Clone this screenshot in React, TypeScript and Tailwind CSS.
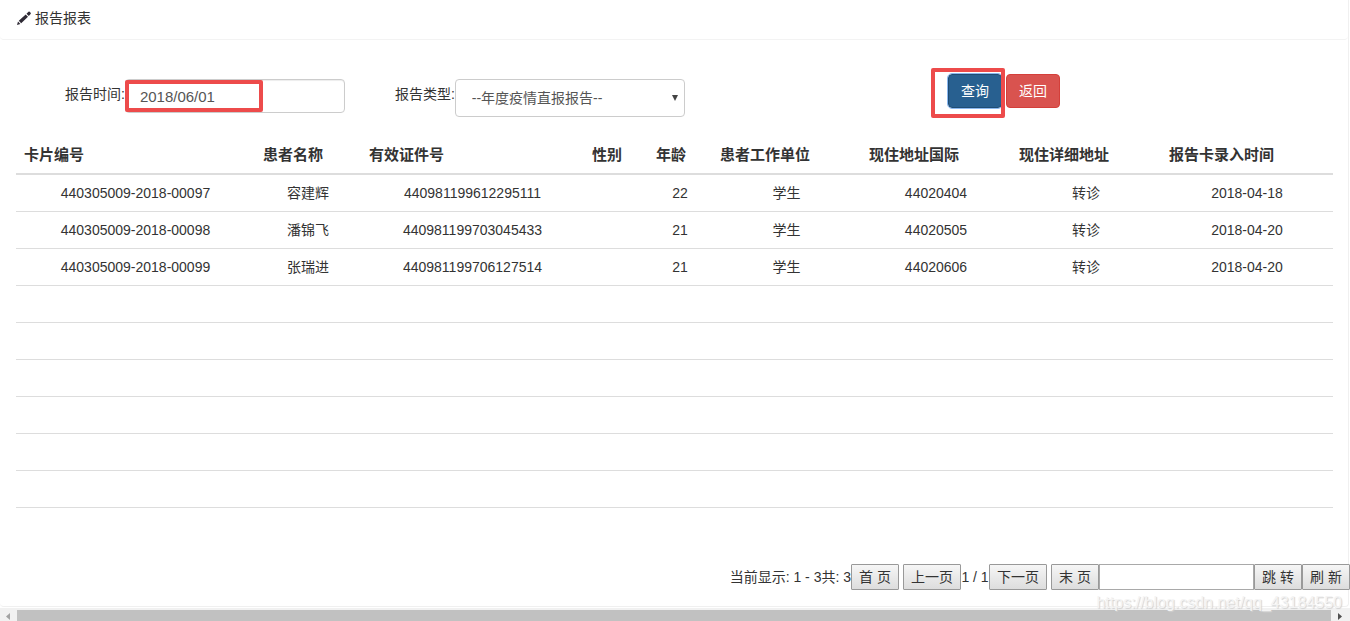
import React, { useState } from "react";

const columns = [
  { title: "卡片编号", width: "w-[239px]" },
  { title: "患者名称", width: "w-[106px]" },
  { title: "有效证件号", width: "w-[223px]" },
  { title: "性别", width: "w-16" },
  { title: "年龄", width: "w-16" },
  { title: "患者工作单位", width: "w-[149px]" },
  { title: "现住地址国际", width: "w-[150px]" },
  { title: "现住详细地址", width: "w-[150px]" },
  { title: "报告卡录入时间", width: "" },
];

const empty = ["", "", "", "", "", "", "", "", ""];

const rows = [
  ["440305009-2018-00097", "容建辉", "440981199612295111", "", "22", "学生", "44020404", "转诊", "2018-04-18"],
  ["440305009-2018-00098", "潘锦飞", "440981199703045433", "", "21", "学生", "44020505", "转诊", "2018-04-20"],
  ["440305009-2018-00099", "张瑞进", "440981199706127514", "", "21", "学生", "44020606", "转诊", "2018-04-20"],
  empty,
  empty,
  empty,
  empty,
  empty,
  empty,
];

const PencilIcon = () => (
  <svg viewBox="0 0 15 14" className="h-[14px] w-[15px]" aria-hidden="true">
    <path
      fill="#2f2a35"
      d="M1 14l1-3.4 2.4 2.4zM2.8 9.8l6.9-6.4 2.3 2.3-6.8 6.5zM10.5 2.7L12.5.8q.6-.6 1.2 0l.9.9q.6.6 0 1.2L12.8 4.9z"
    />
  </svg>
);

const PageButton: React.FC<{ text: string; className?: string }> = ({
  text,
  className = "w-12",
}) => (
  <button
    type="button"
    className={`h-[26px] shrink-0 rounded-[1px] border border-[#999] bg-linear-to-b from-[#f6f6f6] to-[#dddddd] leading-5 ${className}`}
  >
    {text}
  </button>
);

const Filters = () => {
  const [date, setDate] = useState("2018/06/01");

  return (
    <form className="flex items-start pr-[288px] pl-[65px]">
      <label htmlFor="date" className="mt-[10px] leading-5">
        报告时间:
      </label>
      <div className="relative mt-[5px] w-[220px]">
        <input
          id="date"
          value={date}
          onChange={(e) => setDate(e.target.value)}
          className="h-[34px] w-full rounded border border-[#ccc] px-[14px] text-[15px] text-[#555] shadow-[inset_0_1px_1px_rgba(0,0,0,0.075)]"
        />
        <span className="pointer-events-none absolute top-px left-0 h-8 w-[138px] rounded-xs border-4 border-[#ed4b4b]" />
      </div>

      <label htmlFor="type" className="mt-[10px] ml-[50px] leading-5">
        报告类型:
      </label>
      <div className="relative mt-[5px] w-[230px]">
        <select
          id="type"
          className="h-[38px] w-full appearance-none rounded border border-[#ccc] bg-white px-4 text-[#555]"
        >
          <option>--年度疫情直报报告--</option>
        </select>
        <svg
          viewBox="0 0 6 6"
          className="pointer-events-none absolute top-4 right-[7px] h-[6px] w-[6px]"
          aria-hidden="true"
        >
          <path fill="#444" d="M0 0h6L3 6z" />
        </svg>
      </div>

      <div className="relative ml-auto flex gap-1">
        <button
          type="button"
          className="h-[34px] rounded border border-[#204d74] bg-[#286090] px-3 text-white outline-1 outline-[#8ab8f0]"
        >
          查询
        </button>
        <button
          type="button"
          className="h-[34px] rounded border border-[#d43f3a] bg-[#d9534f] px-3 text-white"
        >
          返回
        </button>
        <span className="pointer-events-none absolute -top-[6px] -left-[17px] h-[50px] w-[74px] rounded-xs border-4 border-[#ed4b4b]" />
      </div>
    </form>
  );
};

const ReportTable = () => (
  <table className="w-full table-fixed border-collapse">
    <thead>
      <tr className="h-[38px] border-b-2 border-[#ddd] text-[15px]">
        {columns.map((col) => (
          <th key={col.title} className={`px-2 text-left font-bold ${col.width}`}>
            {col.title}
          </th>
        ))}
      </tr>
    </thead>
    <tbody>
      {rows.map((row, i) => (
        <tr key={i} className="h-[37px] border-b border-[#ddd] text-center">
          {row.map((cell, j) => (
            <td key={j}>{cell}</td>
          ))}
        </tr>
      ))}
    </tbody>
  </table>
);

const Pagination = () => (
  <div className="flex items-center justify-end whitespace-nowrap">
    <span>当前显示: 1 - 3共: 3</span>
    <PageButton text="首 页" />
    <PageButton text="上一页" className="ml-1 w-[58px]" />
    <span className="w-7 text-center">1 / 1</span>
    <PageButton text="下一页" className="w-[58px]" />
    <PageButton text="末 页" className="ml-1 w-12" />
    <input
      aria-label="页码"
      className="h-[26px] w-[155px] border border-[#a9a9a9] bg-white px-1"
    />
    <PageButton text="跳 转" />
    <PageButton text="刷 新" />
  </div>
);

const ScrollBar = () => (
  <div className="flex h-[13px] items-end overflow-hidden bg-[#f1f1f1]">
    <svg viewBox="0 0 17 11" className="h-[11px] w-[17px]" aria-hidden="true">
      <path fill="#a3a3a3" d="M10 3v7L6 6.5z" />
    </svg>
    <span className="h-[11px] flex-1 bg-[#c1c1c1]" />
    <svg viewBox="0 0 19 11" className="h-[11px] w-[19px]" aria-hidden="true">
      <path fill="#505050" d="M7 3v7l4-3.5z" />
    </svg>
  </div>
);

export default function App() {
  return (
    <div className="relative overflow-hidden bg-white font-['Liberation_Sans','Noto_Sans_CJK_SC',sans-serif] text-sm text-[#333]">
      <div className="mr-px rounded-b border-r border-b border-[#f0f0f0]">
        <header className="flex h-10 items-center gap-1 rounded-b border-b border-[#f3f3f3] px-4 pb-1">
          <PencilIcon />
          <h1>报告报表</h1>
        </header>
        <main className="pt-[34px] pb-4">
          <Filters />
          <div className="mt-[19px] pr-[15px] pl-4">
            <ReportTable />
          </div>
          <div className="-mr-0.5 mt-14">
            <Pagination />
          </div>
        </main>
      </div>
      <div className="mt-px">
        <ScrollBar />
      </div>
      <span className="pointer-events-none absolute right-2 bottom-2 text-base leading-5 text-[#f4f4f4] [text-shadow:1px_1px_1px_#d0d0d0]">
        https://blog.csdn.net/qq_43184550
      </span>
    </div>
  );
}
